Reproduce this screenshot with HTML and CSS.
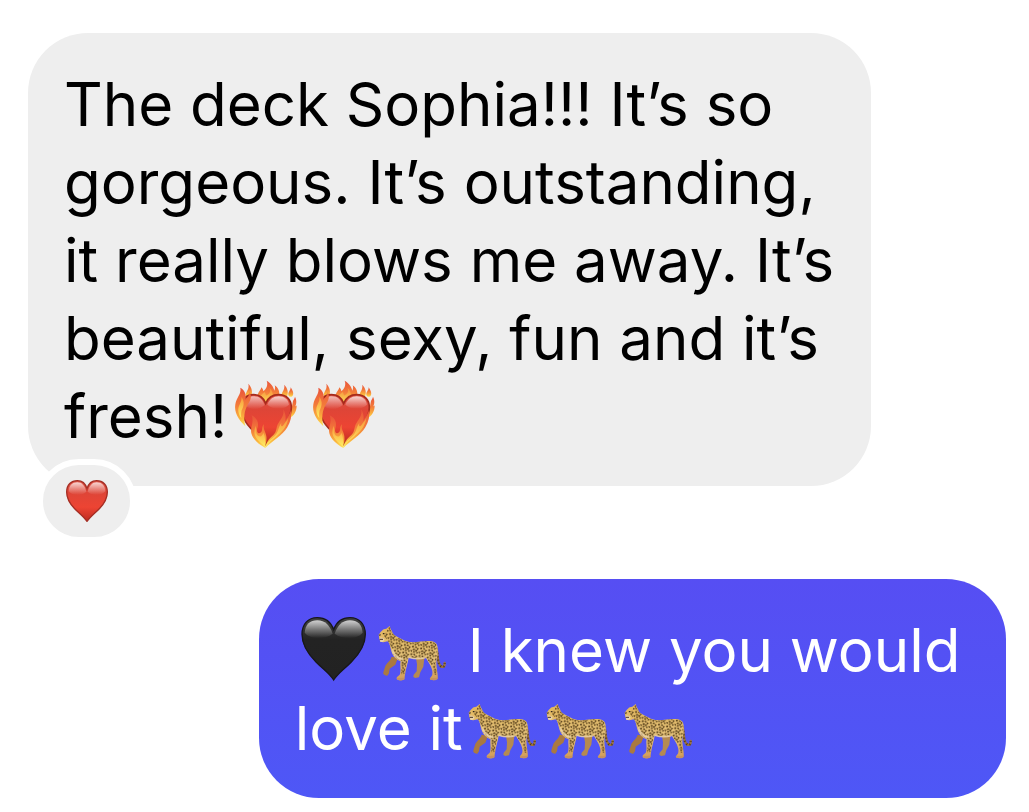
FILE: index.html
```html
<!DOCTYPE html>
<html lang="en">

<head>
    <meta charset="UTF-8">
    <meta name="viewport" content="width=device-width, initial-scale=1.0">
    <title>Chat</title>
    <link rel="stylesheet" href="styles.css">
</head>

<body>
    <!-- Emoji artwork -->
    <svg class="defs" aria-hidden="true">
        <defs>
            <linearGradient id="red" x1="0" y1="0" x2="0" y2="1">
                <stop offset="0" stop-color="#e0574a"/>
                <stop offset="0.3" stop-color="#de4537"/>
                <stop offset="0.65" stop-color="#ed4433"/>
                <stop offset="1" stop-color="#bd2b20"/>
            </linearGradient>
            <linearGradient id="black" x1="0" y1="0" x2="0" y2="1">
                <stop offset="0" stop-color="#444"/>
                <stop offset="0.35" stop-color="#232323"/>
                <stop offset="1" stop-color="#222"/>
            </linearGradient>
            <linearGradient id="shine" x1="0" y1="0" x2="0" y2="1">
                <stop offset="0" stop-color="#fff" stop-opacity="0.75"/>
                <stop offset="0.5" stop-color="#fff" stop-opacity="0.35"/>
                <stop offset="1" stop-color="#fff" stop-opacity="0"/>
            </linearGradient>
            <linearGradient id="flame" x1="0" y1="0" x2="0" y2="1">
                <stop offset="0" stop-color="#e9533b"/>
                <stop offset="0.45" stop-color="#f37b3a"/>
                <stop offset="0.8" stop-color="#fbb53e"/>
                <stop offset="1" stop-color="#fde45a"/>
            </linearGradient>
            <linearGradient id="core" x1="0" y1="0" x2="0" y2="1">
                <stop offset="0" stop-color="#f79a3c"/>
                <stop offset="1" stop-color="#ffee63"/>
            </linearGradient>
            <linearGradient id="fur" x1="0" y1="0" x2="0" y2="1">
                <stop offset="0" stop-color="#e2b65c"/>
                <stop offset="0.6" stop-color="#e5c37c"/>
                <stop offset="1" stop-color="#d19a55"/>
            </linearGradient>
            <pattern id="spots" width="25" height="23" patternUnits="userSpaceOnUse" patternTransform="rotate(12)">
                <g fill="#4a3312" stroke="#4a3312" stroke-width="1.5" stroke-linejoin="round">
                    <path d="M3 3l4-1 1 3-3 2zM13 2l4 1-1 3-3-1zM20 6l3 0-1 4-3-1zM8 11l4-1 0 4-4 0zM16 12l4 1-2 4-3-2zM2 15l3 1-1 4-2-2zM10 18l4 0-1 3-3 0zM20 19l3-1 0 3-3 0z"/>
                </g>
            </pattern>

            <symbol id="heart" viewBox="0 0 126 126">
                <path d="M63 124C54 111 42 102 26 86C10 70 2 56 2 36C2 14 16 2 34 2C49 2 59 12 63 26C67 12 77 2 92 2C111 2 124 15 124 36C124 56 116 70 100 86C84 102 72 111 63 124Z" fill="url(#red)" stroke="#a52e24" stroke-width="4"/>
                <path d="M8 34C9 16 19 7 34 7C48 7 56 17 61 35C45 49 18 47 8 34Z" fill="url(#shine)"/>
                <path d="M65 35C70 17 79 7 92 7C107 7 117 16 118 34C107 47 81 49 65 35Z" fill="url(#shine)"/>
            </symbol>

            <symbol id="black-heart" viewBox="15 18 234 234">
                <path d="M131 225C119 206 101 194 78 171C51 144 36 119 36 88C36 57 54 38 82 38C106 38 123 52 131 74C139 52 156 38 180 38C208 38 226 57 226 88C226 119 211 144 184 171C161 194 143 206 131 225Z" fill="url(#black)" stroke="#171719" stroke-width="4"/>
                <path d="M44 83C46 58 60 46 82 46C105 46 119 61 128 86C105 104 61 104 44 83Z" fill="url(#shine)"/>
                <path d="M134 86C143 61 157 46 180 46C202 46 216 58 218 83C201 104 157 104 134 86Z" fill="url(#shine)"/>
            </symbol>

            <symbol id="fire-heart" viewBox="6 21 234 234">
                <!-- flames behind -->
                <path d="M97 82C98 66 107 62 109 52C114 57 115 60 115 64C124 56 130 45 125 32C139 40 146 52 148 62C151 56 151 50 149 46C160 53 164 64 163 78L126 108Z" fill="url(#flame)"/>
                <path d="M106 83C108 71 115 72 119 65C124 76 121 80 130 73C136 68 136 61 134 54C145 65 145 75 139 86L124 104Z" fill="url(#core)" opacity="0.7"/>
                <path d="M170 77C169 65 180 61 178 44C188 55 191 66 186 80Z" fill="url(#flame)"/>
                <path d="M197 52C204 62 207 71 203 77C199 83 191 81 190 74C189 66 197 62 197 52Z" fill="url(#flame)"/>
                <path d="M204 93C206 89 209 85 210 80C216 93 214 102 211 109C213 109 214 108 215 106C215 127 205 138 194 145Z" fill="url(#flame)"/>
                <path d="M61 77C63 63 74 57 70 41C81 53 83 64 79 80Z" fill="url(#flame)"/>
                <path d="M122 224C109 204 79 182 63 157C51 139 48 125 50 108C53 84 67 74 85 74C105 74 116 84 122 100C129 84 143 74 161 74C184 74 199 89 199 112C199 139 182 161 157 187C143 203 132 211 122 224Z" fill="url(#red)" stroke="#a62b1c" stroke-width="5"/>
                <path d="M60 103C62 85 72 79 87 79C104 79 112 88 119 105C101 122 72 122 60 103Z" fill="url(#shine)" opacity="0.8"/>
                <path d="M127 104C134 87 145 79 161 79C179 79 189 88 192 104C177 119 145 121 127 104Z" fill="url(#shine)"/>
                <!-- flames in front -->
                <path d="M61 169C39 148 27 126 31 103C34 83 50 71 46 53C60 61 65 75 61 90C71 79 74 73 74 66C82 81 75 94 68 104C58 122 55 142 61 169Z" fill="url(#flame)"/>
                <path d="M49 145C36 127 39 112 45 101C49 93 50 88 49 81C61 96 55 111 50 121C48 129 48 137 49 145Z" fill="url(#core)"/>
                <path d="M121 234C99 222 84 208 79 190C75 172 88 157 80 136C98 145 102 160 97 175C94 186 99 194 108 187C114 182 108 171 117 163C113 178 123 186 124 199C126 213 121 222 121 234Z" fill="url(#flame)"/>
                <path d="M120 230C102 216 88 202 88 187C88 177 91 173 91 167C98 181 90 189 99 197C108 203 113 196 115 188C122 201 120 215 120 230Z" fill="url(#core)"/>
                <path d="M121 234C122 219 131 207 145 195C157 184 152 173 160 160C167 147 178 138 175 118C184 135 182 147 181 154C186 143 194 135 198 119C201 137 197 155 187 172C173 196 139 215 121 234Z" fill="url(#flame)"/>
                <path d="M122 231C129 210 147 205 155 190C162 177 160 171 169 159C167 170 170 172 176 164C182 156 186 151 190 145C186 171 171 186 153 200C140 210 130 218 122 231Z" fill="url(#core)"/>
            </symbol>

            <symbol id="leopard" viewBox="17 -3 234 234">
                <!-- far legs -->
                <path d="M145 132L149 157L148 178L139 188L138 195L144 198L155 196L159 181L168 164L171 138Z" fill="#b58a51"/>
                <path d="M73 134C70 146 58 153 54 162L48 181C46 187 52 192 60 191L65 184L67 170L84 158L92 137Z" fill="#aa7941"/>
                <!-- tail -->
                <path d="M208 113C213 130 208 150 220 162C227 168 233 163 232 153" fill="none" stroke="#9c743c" stroke-width="7" stroke-linecap="round"/>
                <path d="M208 113C213 130 208 150 220 162C227 168 233 163 232 153" fill="none" stroke="#543b20" stroke-width="7" stroke-dasharray="3 7"/>
                <!-- body -->
                <path d="M34 68C41 59 46 50 57 50L67 42L70 52C75 57 74 64 81 69C94 76 107 86 126 90C147 92 164 87 181 87C197 86 208 91 210 102C215 119 208 137 207 151C207 170 213 190 211 199C208 206 191 206 188 202C186 197 194 195 195 187C198 171 185 153 176 138C160 143 144 140 124 137C121 155 115 172 113 188L111 202C106 207 88 205 88 200C87 194 96 192 98 187C102 173 97 157 100 148C85 142 75 130 71 113C68 105 68 94 61 88C54 91 43 91 39 89L36 80Z" fill="url(#fur)"/>
                <path d="M60 53L68 45L70 54C74 58 74 65 81 70C94 77 107 87 126 91C147 93 164 88 181 88C197 87 207 92 209 102C213 119 207 137 206 151C205 170 210 181 207 190L200 187C201 170 187 151 176 137C160 142 144 139 122 136C119 155 113 170 111 187L101 187C105 173 99 157 102 147C87 141 77 130 73 113C70 105 70 94 61 86L50 72Z" fill="url(#spots)"/>
                <path d="M73 116C77 131 91 142 107 145L107 139C95 137 82 126 75 110Z" fill="#ecd5ae" opacity="0.75"/>
                <path d="M124 136C140 141 159 142 174 137" fill="none" stroke="#ecd5ae" stroke-width="4" opacity="0.8"/>
                <!-- face and paws -->
                <path d="M37 78C44 75 47 78 52 83C48 90 43 91 39 89Z" fill="#e9d2aa"/>
                <path d="M34 68L41 67L38 73Z" fill="#3d302d"/>
                <path d="M37 82L47 82" stroke="#4b3421" stroke-width="3"/>
                <ellipse cx="49" cy="65" rx="3" ry="2" fill="#211b15"/>
                <path d="M63 47L69 46L67 55Z" fill="#82592d"/>
                <path d="M88 199L112 197L111 202C106 207 89 206 88 199ZM188 199L212 197L211 200C208 206 190 207 188 199Z" fill="#c59160"/>
            </symbol>
        </defs>
    </svg>

    <main class="chat">
        <!-- Received message -->
        <div class="bubble received">
            <p>The deck Sophia!!! It’s so gorgeous. It’s outstanding, it really blows me away. It’s beautiful, sexy, fun and it’s fresh!<svg class="emoji" role="img" aria-label="heart on fire"><use href="#fire-heart"/></svg><svg class="emoji" role="img" aria-label="heart on fire"><use href="#fire-heart"/></svg></p>
            <button class="reaction" type="button" aria-label="Heart reaction">
                <svg class="reaction-icon" aria-hidden="true"><use href="#heart"/></svg>
            </button>
        </div>

        <!-- Sent message -->
        <div class="bubble sent">
            <p><svg class="emoji" role="img" aria-label="black heart"><use href="#black-heart"/></svg><svg class="emoji" role="img" aria-label="leopard"><use href="#leopard"/></svg> I knew you would love it<svg class="emoji" role="img" aria-label="leopard"><use href="#leopard"/></svg><svg class="emoji" role="img" aria-label="leopard"><use href="#leopard"/></svg><svg class="emoji" role="img" aria-label="leopard"><use href="#leopard"/></svg></p>
        </div>
    </main>
</body>

</html>
```

FILE: styles.css
```css
* {
    box-sizing: border-box;
}

body {
    margin: 0;
    background: #fff;
    font-family: Inter, "Liberation Sans", sans-serif;
}

.defs {
    position: absolute;
    width: 0;
    height: 0;
}

.chat {
    display: flex;
    flex-direction: column;
    gap: 93px;
    padding: 33px 23px 14px 28px;
}

.bubble {
    position: relative;
    padding: 32px 36px 31px;
    border-radius: 60px;
    font-size: 60px;
    line-height: 78px;
}

.bubble p {
    margin: 0;
}

.received {
    align-self: flex-start;
    max-width: 86.2%;
    background: #eee;
    color: #000;
}

.sent {
    align-self: flex-end;
    max-width: 76.4%;
    background: linear-gradient(#564ef3, #4e57f6);
    color: #fff;
}

.emoji {
    width: 78px;
    height: 78px;
    vertical-align: top;
}

.reaction {
    position: absolute;
    left: 9px;
    bottom: -57px;
    display: flex;
    align-items: center;
    justify-content: center;
    width: 99px;
    height: 84px;
    padding: 0;
    border: 6px solid #fff;
    border-radius: 42px;
    background: #eee;
    cursor: pointer;
}

.reaction-icon {
    width: 42px;
    height: 42px;
}
```
